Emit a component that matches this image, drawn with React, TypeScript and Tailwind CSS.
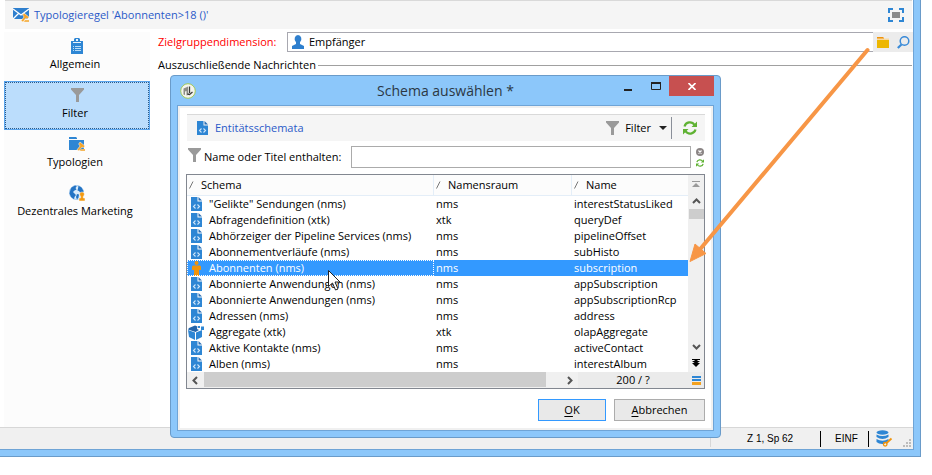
import React from "react";

type IconProps = { className?: string };

const Funnel = ({ className = "" }: IconProps) => (
  <svg className={className} width="13" height="14" viewBox="0 0 13 14" aria-hidden="true">
    <path d="M0 0h13v1.500L8 7v7H5V7L0 1.500z" fill="#9a9a9a" />
  </svg>
);

const Clipboard = () => (
  <svg width="12" height="16" viewBox="0 0 12 16" aria-hidden="true">
    <path d="M0 3h3V1l1-1h4l1 1v2h3v13H0z" fill="#2e86d4" />
    <path d="M5 1h2v2H5zM2 4h8v1H2z" fill="#e8f3fc" />
    <path d="M2 8h1v1H2zM4 8h6v1H4zM2 10h1v1H2zM4 10h6v1H4zM2 12h1v1H2zM4 12h6v1H4z" fill="#b9dcf7" />
  </svg>
);

const Gavel = ({ x, y }: { x: number; y: number }) => (
  <g transform={`translate(${x} ${y})`}>
    <path d="M3 0l5 4-1.500 2-1.500-1-3 4-2-1.200 3-3.800L1.600 2z" fill="#f5a52a" stroke="#fff" strokeWidth=".5" />
    <path d="M4 7h4v2H3z" fill="#f5b95a" />
  </g>
);

const MailRule = () => (
  <svg width="17" height="15" viewBox="0 0 17 15" aria-hidden="true">
    <path d="M0 0h16v11H0z" fill="#2e7fce" />
    <path d="M0 1l8 6 8-6M0 11l5.500-5.500M16 11l-5.500-5.500" fill="none" stroke="#fff" strokeWidth="1.300" />
    <Gavel x={8} y={5} />
  </svg>
);

const FolderRule = () => (
  <svg width="17" height="15" viewBox="0 0 17 15" aria-hidden="true">
    <path d="M0 0h7l1 1v1H0zM0 3h15v10H0z" fill="#2e86d4" />
    <Gavel x={8} y={5} />
  </svg>
);

const GlobePerson = () => (
  <svg width="17" height="16" viewBox="0 0 17 16" aria-hidden="true">
    <circle cx="7.500" cy="7.500" r="7" fill="#d9ebfa" stroke="#8fbde8" strokeWidth=".8" />
    <path
      d="M2.500 2.500L6 .6l1.800.6L6.500 3l1 1.500-2 1L4 7l1.500 1.500L7 10l-1.500 2L5 14.200 2 12 .5 8.500l1-4zM9.500.8l3 1.700 2 3.500-1 2.500-2-.5-1.500-2-1.500-.5L9 3.500z"
      fill="#2474c4"
    />
    <path d="M8 9l2 .5-.5 3L8 14.500 7 12z" fill="#2474c4" />
    <path d="M13 7a2.300 2.300 0 0 1 1.400 4.200L14.300 13H16v3h-6v-3h1.700l-.1-1.800A2.300 2.300 0 0 1 13 7z" fill="#f39a12" stroke="#fff" strokeWidth=".5" />
  </svg>
);

const SchemaDoc = () => (
  <svg width="11" height="14" viewBox="0 0 11 14" aria-hidden="true">
    <path d="M0 0h6.500v4.500H11V14H0z" fill="#2e86d4" />
    <path d="M7.500 0L11 3.500H7.500z" fill="#2a6fb5" />
    <path d="M4.500 7.500L2.500 9.500l2 2M6.500 7.500l2 2-2 2" fill="none" stroke="#cfe6fa" strokeWidth="1.100" />
  </svg>
);

const PersonOrange = () => (
  <svg width="9" height="15" viewBox="0 0 9 15" aria-hidden="true">
    <circle cx="4.500" cy="2" r="2" fill="#f0930a" />
    <path d="M1 4.500h7l1 1V9H7v6H2V9H0V5.500z" fill="#f0930a" />
  </svg>
);

const Cube = () => (
  <svg width="17" height="15" viewBox="0 0 17 15" aria-hidden="true">
    <path d="M1 3l6-2.500 2.500 1L9 4l2 1-3.500 2L0 4.500z" fill="#2365ab" />
    <path d="M0 5l7 2.500V15l-6-3zM8 7.500L14 5v7l-6 3z" fill="#2e86d4" />
    <path d="M10 1h2v2h-2zM13 1.500h3V5h-3z" fill="#2e86d4" />
  </svg>
);

const Refresh = ({ size }: { size: number }) => (
  <svg width={size} height={size} viewBox="0 0 14 14" className="block" aria-hidden="true">
    <path d="M1.500 5.500a5.500 5.500 0 0 1 10-1.500M12.500 8.500a5.500 5.500 0 0 1-10 1.500" fill="none" stroke="#5fb233" strokeWidth="2.200" />
    <path d="M14 .5V6H8.500zM0 13.500V8h5.500z" fill="#5fb233" />
  </svg>
);

const PersonBlue = () => (
  <svg width="12" height="14" viewBox="0 0 12 14" aria-hidden="true">
    <path d="M6 0a3.500 4 0 0 1 2 7.200V9l4 2v3H0v-3l4-2V7.200A3.500 4 0 0 1 6 0z" fill="#2e7fce" />
  </svg>
);

const Folder = () => (
  <svg width="12" height="11" viewBox="0 0 12 11" aria-hidden="true">
    <path d="M0 0h6l1 1v1H0z" fill="#f0930a" />
    <path d="M0 1.500h12V3H0z" fill="#f8d9a0" />
    <path d="M0 3h12v8H0z" fill="#edb700" />
  </svg>
);

const Magnifier = () => (
  <svg width="13" height="13" viewBox="0 0 13 13" aria-hidden="true">
    <circle cx="7.500" cy="5" r="4.300" fill="none" stroke="#3a8bd8" strokeWidth="1.500" />
    <path d="M4.500 8.500L.8 12" stroke="#3a8bd8" strokeWidth="2.200" />
  </svg>
);

const FitScreen = () => (
  <svg width="16" height="14" viewBox="0 0 16 14" className="block" aria-hidden="true">
    <path d="M5 1H1v4M11 1h4v4M5 13H1V9M11 13h4V9" fill="none" stroke="#2e86d4" strokeWidth="2" />
    <path d="M4 4h8v6H4z" fill="#8a8a8a" />
  </svg>
);

const Database = () => (
  <svg width="17" height="17" viewBox="0 0 17 17" aria-hidden="true">
    <ellipse cx="6.500" cy="2.500" rx="6" ry="2.200" fill="#2e86d4" />
    <path d="M.5 4.500q6 3 12 0V7q-6 4-12 0zM.5 9q6 3.500 12 0v1.500L8 14q-5 .5-7.500-2z" fill="#2e86d4" />
    <path d="M15.500 8.500L10 13.500" stroke="#f0930a" strokeWidth="1.800" />
    <circle cx="9.200" cy="14.300" r="1.800" fill="none" stroke="#f0930a" strokeWidth="1.300" />
  </svg>
);

const AppBadge = () => (
  <svg width="16" height="16" viewBox="0 0 16 16" className="block" aria-hidden="true">
    <circle cx="8" cy="8" r="7.300" fill="#f4f4ee" stroke="#a3c957" />
    <path d="M3.500 5.500L6 4.500l2-1V12l-1.500.5V8L5 8.500V12l-1.500-.5z" fill="#8d8d86" />
    <path d="M9.500 3.500V10M7.500 11l2 .5 3-2.500" stroke="#3c3c38" strokeWidth="1.300" fill="none" />
  </svg>
);

const Grip = () => (
  <svg width="8" height="8" viewBox="0 0 8 8" className="block" aria-hidden="true">
    <path d="M6 0h2v2H6zM3 3h2v2H3zM6 3h2v2H6zM0 6h2v2H0zM3 6h2v2H3zM6 6h2v2H6z" fill="#bcbcbc" />
  </svg>
);

const SortMark = () => (
  <svg width="6" height="8" viewBox="0 0 6 8" aria-hidden="true">
    <path d="M.5 7.500L4 .5" stroke="#777" fill="none" />
  </svg>
);

const Chevron = ({ dir }: { dir: "up" | "down" | "left" | "right" }) => {
  const d = {
    up: "M1 6l3.500-3.500L8 6",
    down: "M1 3l3.500 3.500L8 3",
    left: "M6 1L2.500 4.500 6 8",
    right: "M3 1l3.500 3.500L3 8",
  }[dir];
  return (
    <svg width="9" height="9" viewBox="0 0 9 9" aria-hidden="true">
      <path d={d} stroke="#555" strokeWidth="2" fill="none" />
    </svg>
  );
};

const navItems = [
  { label: "Allgemein", icon: <Clipboard />, active: false },
  { label: "Filter", icon: <Funnel />, active: true },
  { label: "Typologien", icon: <FolderRule />, active: false },
  { label: "Dezentrales Marketing", icon: <GlobePerson />, active: false },
];

const rows = [
  { label: '"Gelikte" Sendungen (nms)', ns: "nms", name: "interestStatusLiked", kind: "doc" },
  { label: "Abfragendefinition (xtk)", ns: "xtk", name: "queryDef", kind: "doc" },
  { label: "Abhörzeiger der Pipeline Services (nms)", ns: "nms", name: "pipelineOffset", kind: "doc" },
  { label: "Abonnementverläufe (nms)", ns: "nms", name: "subHisto", kind: "doc" },
  { label: "Abonnenten (nms)", ns: "nms", name: "subscription", kind: "person" },
  { label: "Abonnierte Anwendungen (nms)", ns: "nms", name: "appSubscription", kind: "doc" },
  { label: "Abonnierte Anwendungen (nms)", ns: "nms", name: "appSubscriptionRcp", kind: "doc" },
  { label: "Adressen (nms)", ns: "nms", name: "address", kind: "doc" },
  { label: "Aggregate (xtk)", ns: "xtk", name: "olapAggregate", kind: "cube" },
  { label: "Aktive Kontakte (nms)", ns: "nms", name: "activeContact", kind: "doc" },
  { label: "Alben (nms)", ns: "nms", name: "interestAlbum", kind: "doc" },
];

const RowIcon = ({ kind }: { kind: string }) =>
  kind === "person" ? <PersonOrange /> : kind === "cube" ? <Cube /> : <SchemaDoc />;

function SchemaTable() {
  return (
    <div className="border border-[#828790]">
      <div className="flex">
        <table className="min-w-0 flex-1 table-fixed border-separate border-spacing-0">
          <colgroup>
            <col className="w-[247px]" />
            <col className="w-[138px]" />
            <col />
          </colgroup>
          <thead>
            <tr className="h-[21px] bg-[#fcfcfc]">
              {["Schema", "Namensraum", "Name"].map((h) => (
                <th
                  key={h}
                  scope="col"
                  className="border-b border-r border-[#e4eef8] p-0 text-left font-normal last:border-r-0"
                >
                  <span className="flex items-center gap-1.5 pl-0.5 leading-4">
                    <SortMark />
                    {h}
                  </span>
                </th>
              ))}
            </tr>
          </thead>
          <tbody>
            {rows.map((r, i) => {
              const sel = r.kind === "person";
              return (
                <tr key={i} aria-selected={sel} className={sel ? "h-4 bg-[#3399ff] text-white" : "h-4"}>
                  <td className="p-0">
                    <span
                      className={
                        sel
                          ? "flex h-4 items-center whitespace-nowrap leading-4 outline outline-1 -outline-offset-1 outline-dotted outline-white"
                          : "flex h-4 items-center whitespace-nowrap leading-4"
                      }
                    >
                      <span className="flex w-[22px] shrink-0 justify-center pr-[3px]">
                        <RowIcon kind={r.kind} />
                      </span>
                      {r.label}
                    </span>
                  </td>
                  <td className="p-0 pl-0.5 leading-4">{r.ns}</td>
                  <td className="p-0 pl-0.5 leading-4">{r.name}</td>
                </tr>
              );
            })}
          </tbody>
        </table>
        <div className="flex w-4 flex-col items-center bg-[#f0f0f0]">
          <button type="button" aria-label="Zum Anfang" className="flex h-[18px] w-full items-center justify-center">
            <svg width="8" height="7" viewBox="0 0 8 7" aria-hidden="true">
              <path d="M0 0h8v1H0zM4 2l4 4H0z" fill="#999" />
            </svg>
          </button>
          <button type="button" aria-label="Nach oben" className="flex h-4 w-full items-center justify-center">
            <Chevron dir="up" />
          </button>
          <div className="h-[10px] w-[15px] bg-[#cdcdcd]" />
          <div className="flex-1" />
          <button type="button" aria-label="Nach unten" className="flex h-4 w-full items-center justify-center">
            <Chevron dir="down" />
          </button>
          <button type="button" aria-label="Zum Ende" className="flex h-[18px] w-full items-center justify-center">
            <svg width="8" height="8" viewBox="0 0 8 8" aria-hidden="true">
              <path d="M0 0h8v1H0zM2.500 1h3v1H8L4 5 0 2h2.500zM0 4h8L4 8z" fill="#000" />
            </svg>
          </button>
        </div>
      </div>
      <div className="flex h-4 items-stretch bg-[#f0f0f0]">
        <button type="button" aria-label="Nach links" className="flex w-[17px] items-center justify-center">
          <Chevron dir="left" />
        </button>
        <div className="mb-px w-[342px] bg-[#cdcdcd]" />
        <div className="flex-1" />
        <button type="button" aria-label="Nach rechts" className="flex w-[17px] items-center justify-center">
          <Chevron dir="right" />
        </button>
        <div className="w-[110px] bg-[#ebebeb] text-center leading-4">200 / ?</div>
        <button type="button" aria-label="Zeilen" className="flex w-4 items-center justify-center bg-[#ebebeb]">
          <svg width="9" height="9" viewBox="0 0 9 9" aria-hidden="true">
            <path d="M0 0h9v2H0zM0 3h9v2H0z" fill="#2e86d4" />
            <path d="M0 6h9v3H0z" fill="#f3a11f" />
          </svg>
        </button>
      </div>
    </div>
  );
}

function SchemaDialog() {
  return (
    <section
      role="dialog"
      aria-label="Schema auswählen"
      className="absolute left-[170px] top-[75px] w-[551px] rounded-[4px] border border-[#6a9bc9] bg-[#8cc7fa] px-1.5 pb-1.5"
    >
      <header className="grid h-[29px] grid-cols-[120px_1fr_120px] items-center">
        <span className="pl-[3px]">
          <AppBadge />
        </span>
        <h2 className="text-center text-[14px] leading-5 text-[#2b3744]">Schema auswählen *</h2>
        <div className="flex h-full items-start justify-end">
          <button type="button" aria-label="Minimieren" className="flex h-5 w-7 items-center justify-center">
            <svg width="8" height="12" viewBox="0 0 8 12" aria-hidden="true">
              <path d="M0 9h8v2H0z" fill="#222" />
            </svg>
          </button>
          <button type="button" aria-label="Maximieren" className="flex h-5 w-[27px] items-center justify-center">
            <svg width="10" height="8" viewBox="0 0 10 8" aria-hidden="true">
              <path d="M.5 1v6.500h9V1" fill="none" stroke="#222" strokeWidth="1" />
              <path d="M0 0h10v2H0z" fill="#222" />
            </svg>
          </button>
          <button type="button" aria-label="Schließen" className="flex h-5 w-[45px] items-center justify-center bg-[#c75050]">
            <svg width="8" height="7" viewBox="0 0 8 7" aria-hidden="true">
              <path d="M.5 0l7 7M7.500 0l-7 7" stroke="#fff" strokeWidth="1.600" />
            </svg>
          </button>
        </div>
      </header>
      <div className="border border-[#6fa4d6] bg-[#f0f0f0] p-0.5">
        <div className="bg-white px-1.5 pb-[7px] pt-1.5">
          <div className="ml-px flex h-[27px] items-center border-t border-[#d9d9d9] bg-[#f5f5f5] pl-2.5 pr-2">
            <SchemaDoc />
            <span className="ml-[7px] flex-1 text-[#2a5ac8]">Entitätsschemata</span>
            <button type="button" className="flex items-center">
              <Funnel />
              <span className="ml-1.5">Filter</span>
              <svg className="ml-2" width="8" height="4" viewBox="0 0 8 4" aria-hidden="true">
                <path d="M0 0h8L4 4z" fill="#222" />
              </svg>
            </button>
            <span className="ml-1 mr-[11px] h-[22px] w-px bg-[#8a8f99]" />
            <button type="button" aria-label="Aktualisieren">
              <Refresh size={14} />
            </button>
          </div>
          <div className="mt-[5px] flex h-[22px] items-center">
            <Funnel className="mb-1 ml-0.5" />
            <label htmlFor="schema-filter" className="ml-[3px] w-[147px] whitespace-nowrap leading-4">
              Name oder Titel enthalten:
            </label>
            <input id="schema-filter" className="h-[22px] min-w-0 flex-1 border border-[#ababab] bg-white px-1 outline-none" />
            <span className="ml-1 flex w-[10px] flex-col items-center gap-[3px]">
              <button type="button" aria-label="Leeren">
                <svg width="8" height="8" viewBox="0 0 8 8" className="block" aria-hidden="true">
                  <circle cx="4" cy="4" r="4" fill="#8b8585" />
                  <path d="M2.500 2.500l3 3M5.500 2.500l-3 3" stroke="#fff" strokeWidth="1.200" />
                </svg>
              </button>
              <button type="button" aria-label="Suche aktualisieren">
                <Refresh size={8} />
              </button>
            </span>
          </div>
          <div className="mt-1.5">
            <SchemaTable />
          </div>
          <div className="mt-2.5 flex justify-end gap-2">
            <button type="button" className="h-[22px] w-[68px] border border-[#3399ff] bg-[#e9e9e9] leading-5">
              <u className="underline-offset-2">O</u>K
            </button>
            <button type="button" className="h-[22px] w-[91px] border border-[#acacac] bg-[#e9e9e9] leading-5">
              <u className="underline-offset-2">A</u>bbrechen
            </button>
          </div>
        </div>
      </div>
    </section>
  );
}

export default function App() {
  return (
    <div className="relative min-h-[475px] bg-white font-['Open_Sans','Noto_Sans',sans-serif] text-[11px] leading-4 text-black">
      <main className="mr-[11px] flex min-h-[457px] flex-col border-b border-r border-[#6a9bc9] bg-[#8cc7fa] pb-1.5 pr-1.5">
        <div className="flex flex-1 flex-col border-b border-r border-[#6fa4d6] bg-white">
          <header className="ml-[5px] mr-px flex h-[29px] items-center justify-between border-t border-[#d9d9d9] bg-[#f5f5f5] pl-2 pr-2">
            <h1 className="flex items-center gap-1 text-[#2a5ac8]">
              <MailRule />
              Typologieregel 'Abonnenten&gt;18 ()'
            </h1>
            <button type="button" aria-label="Vollbild">
              <FitScreen />
            </button>
          </header>
          <div className="flex flex-1 pt-[3px]">
            <nav className="ml-1 w-[146px] bg-[#fcfcfc]">
              {navItems.map((n) => (
                <button
                  key={n.label}
                  type="button"
                  className={
                    n.active
                      ? "flex h-[49px] w-full flex-col items-center border border-[#5aa5ee] bg-[#bbddfc] outline outline-1 -outline-offset-2 outline-dotted outline-[#2c5a88]"
                      : "flex h-[49px] w-full flex-col items-center border border-transparent"
                  }
                >
                  <span className="mt-[3px] flex h-5 items-center">{n.icon}</span>
                  <span className="whitespace-nowrap pr-1">{n.label}</span>
                </button>
              ))}
            </nav>
            <div className="ml-2 min-w-0 flex-1">
              <div className="flex h-5 items-center">
                <label htmlFor="dimension" className="w-[129px] whitespace-nowrap text-[#ff0000]">
                  Zielgruppendimension:
                </label>
                <div className="flex h-5 min-w-0 flex-1 items-center gap-[5px] border border-r-0 border-[#a8a8b0] pl-1">
                  <PersonBlue />
                  <input id="dimension" defaultValue="Empfänger" className="h-4 min-w-0 flex-1 bg-transparent outline-none" />
                </div>
                <div className="flex h-5 items-center gap-2 bg-[#ececec] pl-1 pr-[3px]">
                  <button type="button" aria-label="Auswählen">
                    <Folder />
                  </button>
                  <button type="button" aria-label="Suchen">
                    <Magnifier />
                  </button>
                </div>
              </div>
              <div className="mr-px mt-[5px] flex items-center gap-0.5">
                <span>Auszuschließende Nachrichten</span>
                <span className="h-px flex-1 bg-[#a0a0a0]" />
              </div>
            </div>
          </div>
          <footer className="flex h-[22px] items-center justify-end border-t border-[#d7d7d7] bg-[#f0f0f0] font-['Liberation_Sans',Arial,sans-serif] text-[10px]">
            <span className="h-4 w-px bg-[#d7d7d7]" />
            <span className="w-[109px] pl-9">Z 1, Sp 62</span>
            <span className="h-4 w-px bg-black" />
            <span className="w-[47px] pl-1 text-center">EINF</span>
            <span className="h-4 w-px bg-black" />
            <span className="ml-[7px]">
              <Database />
            </span>
            <span className="ml-2.5 mr-0.5 self-end pb-0.5">
              <Grip />
            </span>
          </footer>
        </div>
      </main>
      <SchemaDialog />
      <svg className="pointer-events-none absolute left-[320px] top-[40px]" width="560" height="260" viewBox="320 40 560 260" aria-hidden="true">
        <path d="M867.500 50L699 250.500" stroke="#f79646" strokeWidth="4" strokeLinecap="round" />
        <path d="M690 261.500l5-17.500 11 9.500z" fill="#f79646" stroke="#f79646" strokeLinejoin="round" />
        <path d="M328.500 270.500v16l4-3.500 3 7 2.500-1-3-7h5z" fill="#fff" stroke="#222" />
      </svg>
    </div>
  );
}
